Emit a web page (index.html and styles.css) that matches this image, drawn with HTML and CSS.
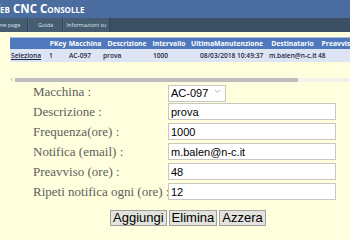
FILE: index.html
```html
<!DOCTYPE html>
<html lang="it">
<head>
    <meta charset="UTF-8">
    <title>Web CNC Consolle</title>
    <link rel="stylesheet" href="styles.css">
</head>
<body>
    <div class="header">
        <h1 class="title">Web CNC Consolle</h1>
    </div>
    <div class="menu">
        <a href="#" class="m_home">Home page</a>
        <a href="#" class="m_guida">Guida</a>
        <a href="#" class="m_info">Informazioni su</a>
    </div>
    <div class="grid_wrap">
        <table class="grid">
            <colgroup>
                <col style="width: 38px">
                <col style="width: 20px">
                <col style="width: 34px">
                <col style="width: 50px">
                <col style="width: 34px">
                <col style="width: 82px">
                <col style="width: 49px">
                <col style="width: 42px">
                <col style="width: 40px">
            </colgroup>
            <tr class="grid_head">
                <th></th>
                <th>PKey</th>
                <th>Macchina</th>
                <th>Descrizione</th>
                <th>Intervallo</th>
                <th>UltimaManutenzione</th>
                <th>Destinatario</th>
                <th>Preavviso</th>
                <th>Ripeti</th>
            </tr>
            <tr class="grid_row">
                <td><a href="#">Seleziona</a></td>
                <td>1</td>
                <td>AC-097</td>
                <td>prova</td>
                <td>1000</td>
                <td class="date">08/03/2018 10:49:37</td>
                <td>m.balen@n-c.it</td>
                <td>48</td>
                <td>12</td>
            </tr>
        </table>
    </div>
    <div class="scrollbar">
        <span class="arrow">&lsaquo;</span>
        <span class="thumb"></span>
        <span class="track"></span>
    </div>
    <form class="edit_form">
        <label>Macchina :</label>
        <div class="sel_box">
            <select class="sel"><option>AC-097</option></select>
            <svg class="sel_arrow" width="7" height="5" viewBox="0 0 7 5"><path d="M1 1 L3.5 3.5 L6 1" fill="none" stroke="#b4b4b4" stroke-width="1"/></svg>
        </div>
        <label>Descrizione :</label>
        <input type="text" value="prova">
        <label>Frequenza(ore) :</label>
        <input type="text" value="1000">
        <label>Notifica (email) :</label>
        <input type="text" value="m.balen@n-c.it">
        <label>Preavviso (ore) :</label>
        <input type="text" value="48">
        <label>Ripeti notifica ogni (ore) :</label>
        <input type="text" value="12">
    </form>
    <div class="buttons">
        <button type="button">Aggiungi</button>
        <button type="button">Elimina</button>
        <button type="button">Azzera</button>
    </div>
</body>
</html>
```

FILE: styles.css
```css
body {
    margin: 0;
    background-color: #ffffdd;
    overflow: hidden;
}
.header {
    background-color: #4b6c9e;
    height: 18px;
    overflow: hidden;
}
.title {
    margin: 0 0 0 -11px;
    color: #ffffff;
    font-family: "Open Sans", sans-serif;
    font-variant: small-caps;
    font-weight: bold;
    font-size: 11.5px;
    line-height: 18px;
    white-space: nowrap;
}
.menu {
    display: flex;
    background-color: #3a4f63;
    height: 14px;
    margin-left: -17px;
}
.menu a {
    display: block;
    box-sizing: border-box;
    background-color: #465c71;
    border-right: 1px solid #33475a;
    border-left: 1px solid #4e667d;
    color: #dde4ec;
    font-family: "Open Sans", sans-serif;
    font-size: 5.5px;
    line-height: 14px;
    text-align: center;
    text-decoration: none;
    white-space: nowrap;
}
.m_home {
    width: 45px;
}
.m_guida {
    width: 35px;
}
.m_info {
    width: 47px;
}
.grid_wrap {
    margin: 5px 0 0 10px;
    border-top: 1px solid #a9bde0;
    overflow: hidden;
    height: 38px;
}
.grid {
    table-layout: fixed;
    width: 389px;
    border-collapse: collapse;
    font-family: "Open Sans", sans-serif;
    font-weight: bold;
    white-space: nowrap;
}
.grid th {
    background-color: #5079bd;
    color: #ffffff;
    text-align: center;
    font-size: 6.8px;
    height: 11px;
    padding: 0;
    overflow: visible;
}
.grid td {
    background-color: #dde4f3;
    color: #1c2742;
    font-size: 6.6px;
    font-weight: 600;
    height: 13px;
    padding: 0 0 0 1px;
}
.grid td a {
    color: #1c2742;
}
.grid td.date {
    padding-left: 14px;
}
.scrollbar {
    display: flex;
    align-items: center;
    height: 6px;
    margin: 1px 0 0 10px;
}
.arrow {
    width: 5px;
    color: #b0b0b0;
    font-size: 8px;
    line-height: 6px;
    font-family: "DejaVu Sans", sans-serif;
}
.thumb {
    width: 283px;
    height: 4px;
    background-color: #bdbdbd;
}
.track {
    flex: 1;
    height: 4px;
    background-color: #f1f1ee;
}
.edit_form {
    display: grid;
    grid-template-columns: 135px 168px;
    grid-auto-rows: 17px;
    row-gap: 3px;
    margin: 0 0 0 33px;
    font-family: "Liberation Serif", serif;
}
.edit_form label {
    color: #606060;
    font-size: 13px;
    line-height: 17px;
    white-space: nowrap;
}
.edit_form input {
    box-sizing: border-box;
    height: 17px;
    width: 168px;
    margin: 0;
    border: 1px solid #c8c8c0;
    background-color: #ffffff;
    font-family: "Liberation Sans", sans-serif;
    font-size: 11px;
    padding: 0 2px;
}
.sel_box {
    position: relative;
    width: 58px;
}
.sel {
    -webkit-appearance: none;
    appearance: none;
    box-sizing: border-box;
    height: 17px;
    width: 58px;
    margin: 0;
    border: 1px solid #c8c8c0;
    border-radius: 0;
    background-color: #ffffff;
    font-family: "Liberation Sans", sans-serif;
    font-size: 11px;
    padding: 0 2px;
}
.sel_arrow {
    position: absolute;
    right: 5px;
    top: 6px;
}
.buttons {
    display: flex;
    gap: 2px;
    margin: 10px 0 0 110px;
}
.buttons button {
    font-family: "Liberation Sans", sans-serif;
    font-size: 13px;
    height: 16px;
    padding: 0 2px;
    background-color: #e2e2de;
    border: 1px solid #a0a0a0;
    color: #000000;
    line-height: 14px;
    cursor: pointer;
}
```
